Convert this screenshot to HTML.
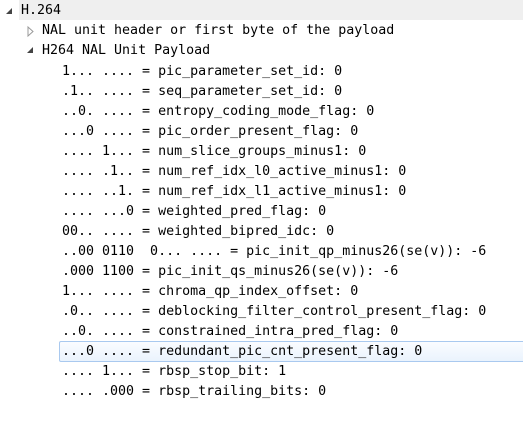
<!DOCTYPE html>
<html><head><style>
body{margin:0;width:523px;height:431px;background:#fff;overflow:hidden;font-family:"DejaVu Sans Mono","Liberation Mono",monospace;font-size:13.3px;color:#000;}
.r{position:absolute;left:0;right:0;height:20px;line-height:20px;white-space:pre;}
.t{position:absolute;}
</style></head><body>
<div style="position:absolute;left:19px;top:0;width:504px;height:20px;background:#efefef"></div>
<div style="position:absolute;left:59px;top:341px;width:470px;height:19px;border:1px solid #a9c9ef;border-radius:2px;background:linear-gradient(#fafcff,#eaf3fd)"></div>
<svg style="position:absolute;left:0;top:0" width="60" height="60">
<polygon points="12,8 12,14 6,14" fill="#444"/>
<polygon points="28,27 28,36 33,31.5" fill="none" stroke="#999" stroke-width="1"/>
<polygon points="33,47 33,53 27,53" fill="#444"/>
</svg>
<div class="r" style="top:1px"><span class="t" style="left:21px">H.264</span></div>
<div class="r" style="top:21px"><span class="t" style="left:42px">NAL unit header or first byte of the payload</span></div>
<div class="r" style="top:41px"><span class="t" style="left:42px">H264 NAL Unit Payload</span></div>
<div class="r" style="top:62px"><span class="t" style="left:62px">1... .... = pic_parameter_set_id: 0</span></div>
<div class="r" style="top:82px"><span class="t" style="left:62px">.1.. .... = seq_parameter_set_id: 0</span></div>
<div class="r" style="top:102px"><span class="t" style="left:62px">..0. .... = entropy_coding_mode_flag: 0</span></div>
<div class="r" style="top:122px"><span class="t" style="left:62px">...0 .... = pic_order_present_flag: 0</span></div>
<div class="r" style="top:142px"><span class="t" style="left:62px">.... 1... = num_slice_groups_minus1: 0</span></div>
<div class="r" style="top:162px"><span class="t" style="left:62px">.... .1.. = num_ref_idx_l0_active_minus1: 0</span></div>
<div class="r" style="top:182px"><span class="t" style="left:62px">.... ..1. = num_ref_idx_l1_active_minus1: 0</span></div>
<div class="r" style="top:202px"><span class="t" style="left:62px">.... ...0 = weighted_pred_flag: 0</span></div>
<div class="r" style="top:222px"><span class="t" style="left:62px">00.. .... = weighted_bipred_idc: 0</span></div>
<div class="r" style="top:242px"><span class="t" style="left:62px">..00 0110  0... .... = pic_init_qp_minus26(se(v)): -6</span></div>
<div class="r" style="top:262px"><span class="t" style="left:62px">.000 1100 = pic_init_qs_minus26(se(v)): -6</span></div>
<div class="r" style="top:282px"><span class="t" style="left:62px">1... .... = chroma_qp_index_offset: 0</span></div>
<div class="r" style="top:302px"><span class="t" style="left:62px">.0.. .... = deblocking_filter_control_present_flag: 0</span></div>
<div class="r" style="top:322px"><span class="t" style="left:62px">..0. .... = constrained_intra_pred_flag: 0</span></div>
<div class="r" style="top:342px"><span class="t" style="left:62px">...0 .... = redundant_pic_cnt_present_flag: 0</span></div>
<div class="r" style="top:362px"><span class="t" style="left:62px">.... 1... = rbsp_stop_bit: 1</span></div>
<div class="r" style="top:382px"><span class="t" style="left:62px">.... .000 = rbsp_trailing_bits: 0</span></div>
</body></html>
